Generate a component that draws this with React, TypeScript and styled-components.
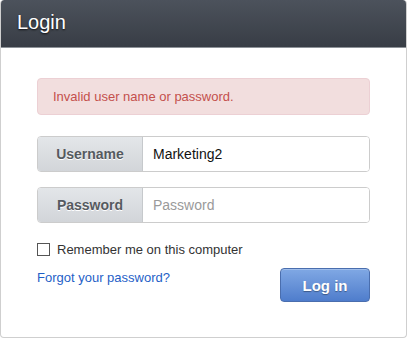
import React from 'react'
import styled, { createGlobalStyle } from 'styled-components'

const GlobalStyle = createGlobalStyle`
  html, body {
    margin: 0;
    padding: 0;
    background: #fff;
  }
  body {
    font-family: "Liberation Sans", Arial, sans-serif;
  }
`

const Panel = styled.div`
  width: 407px;
  height: 338px;
  box-sizing: border-box;
  border: 1px solid #cfcfcf;
  border-top: none;
  border-radius: 4px;
  background: #fff;
  overflow: hidden;
`

const Header = styled.div`
  height: 47px;
  margin: 0 -1px;
  padding-left: 17px;
  display: flex;
  align-items: center;
  border-radius: 4px 4px 0 0;
  border-bottom: 1px solid #8d9298;
  background: linear-gradient(#4c525c, #383d45);
`

const Title = styled.h1`
  margin: 0 0 2px;
  font-size: 20px;
  font-weight: normal;
  color: #fff;
  text-shadow: 0 1px 2px rgba(0, 0, 0, 0.8);
`

const Body = styled.div`
  padding: 30px 36px 0;
  display: flex;
  flex-direction: column;
`

const Alert = styled.div`
  height: 37px;
  box-sizing: border-box;
  padding: 0 15px;
  display: flex;
  align-items: center;
  background: #f2dede;
  border: 1px solid #ecd0d4;
  border-radius: 4px;
  color: #c4504c;
  font-size: 13px;
`

const Group = styled.div<{ $gap: number }>`
  margin-top: ${p => p.$gap}px;
  height: 36px;
  display: flex;
  box-sizing: border-box;
  border: 1px solid #cccccc;
  border-radius: 4px;
  overflow: hidden;
`

const Addon = styled.label`
  width: 104px;
  flex: none;
  display: flex;
  align-items: center;
  justify-content: center;
  border-right: 1px solid #c6c9cc;
  background: linear-gradient(#e3e6e9, #d2d5d9);
  color: #555a5f;
  font-size: 14px;
  font-weight: bold;
  text-shadow: 0 1px 0 #fff;
`

const Field = styled.input`
  flex: 1;
  min-width: 0;
  border: none;
  outline: none;
  padding: 0 10px;
  font-family: "Liberation Sans", Arial, sans-serif;
  font-size: 14px;
  color: #111;
  background: #fff;

  &::placeholder {
    color: #9a9a9a;
  }
`

const Remember = styled.label`
  margin-top: 17px;
  height: 18px;
  display: flex;
  align-items: center;
  gap: 7px;
  font-size: 13px;
  color: #333;
`

const Box = styled.input`
  appearance: none;
  margin: 0;
  width: 13px;
  height: 13px;
  border: 1px solid #555;
  background: #fff;
`

const Footer = styled.div`
  margin-top: 10px;
  display: flex;
  justify-content: space-between;
  align-items: flex-start;
`

const Link = styled.a`
  margin-top: 1px;
  line-height: 18px;
  font-size: 13px;
  color: #1f5fc7;
  text-decoration: none;
`

const Button = styled.button`
  width: 90px;
  height: 34px;
  border: 1px solid #4a6eae;
  border-radius: 4px;
  background: linear-gradient(#80a8e4, #4f7dcc);
  color: #fff;
  font-family: "Liberation Sans", Arial, sans-serif;
  font-size: 15px;
  font-weight: bold;
  text-shadow: 0 1px 1px rgba(0, 0, 0, 0.35);
  box-shadow: inset 0 1px 0 rgba(255, 255, 255, 0.25);
`

export default function App() {
  return (
    <>
      <GlobalStyle />
      <Panel>
        <Header>
          <Title>Login</Title>
        </Header>
        <Body>
          <Alert>Invalid user name or password.</Alert>
          <Group $gap={21}>
            <Addon>Username</Addon>
            <Field defaultValue="Marketing2" />
          </Group>
          <Group $gap={15}>
            <Addon>Password</Addon>
            <Field type="password" placeholder="Password" />
          </Group>
          <Remember>
            <Box type="checkbox" />
            Remember me on this computer
          </Remember>
          <Footer>
            <Link href="#">Forgot your password?</Link>
            <Button>Log in</Button>
          </Footer>
        </Body>
      </Panel>
    </>
  )
}
